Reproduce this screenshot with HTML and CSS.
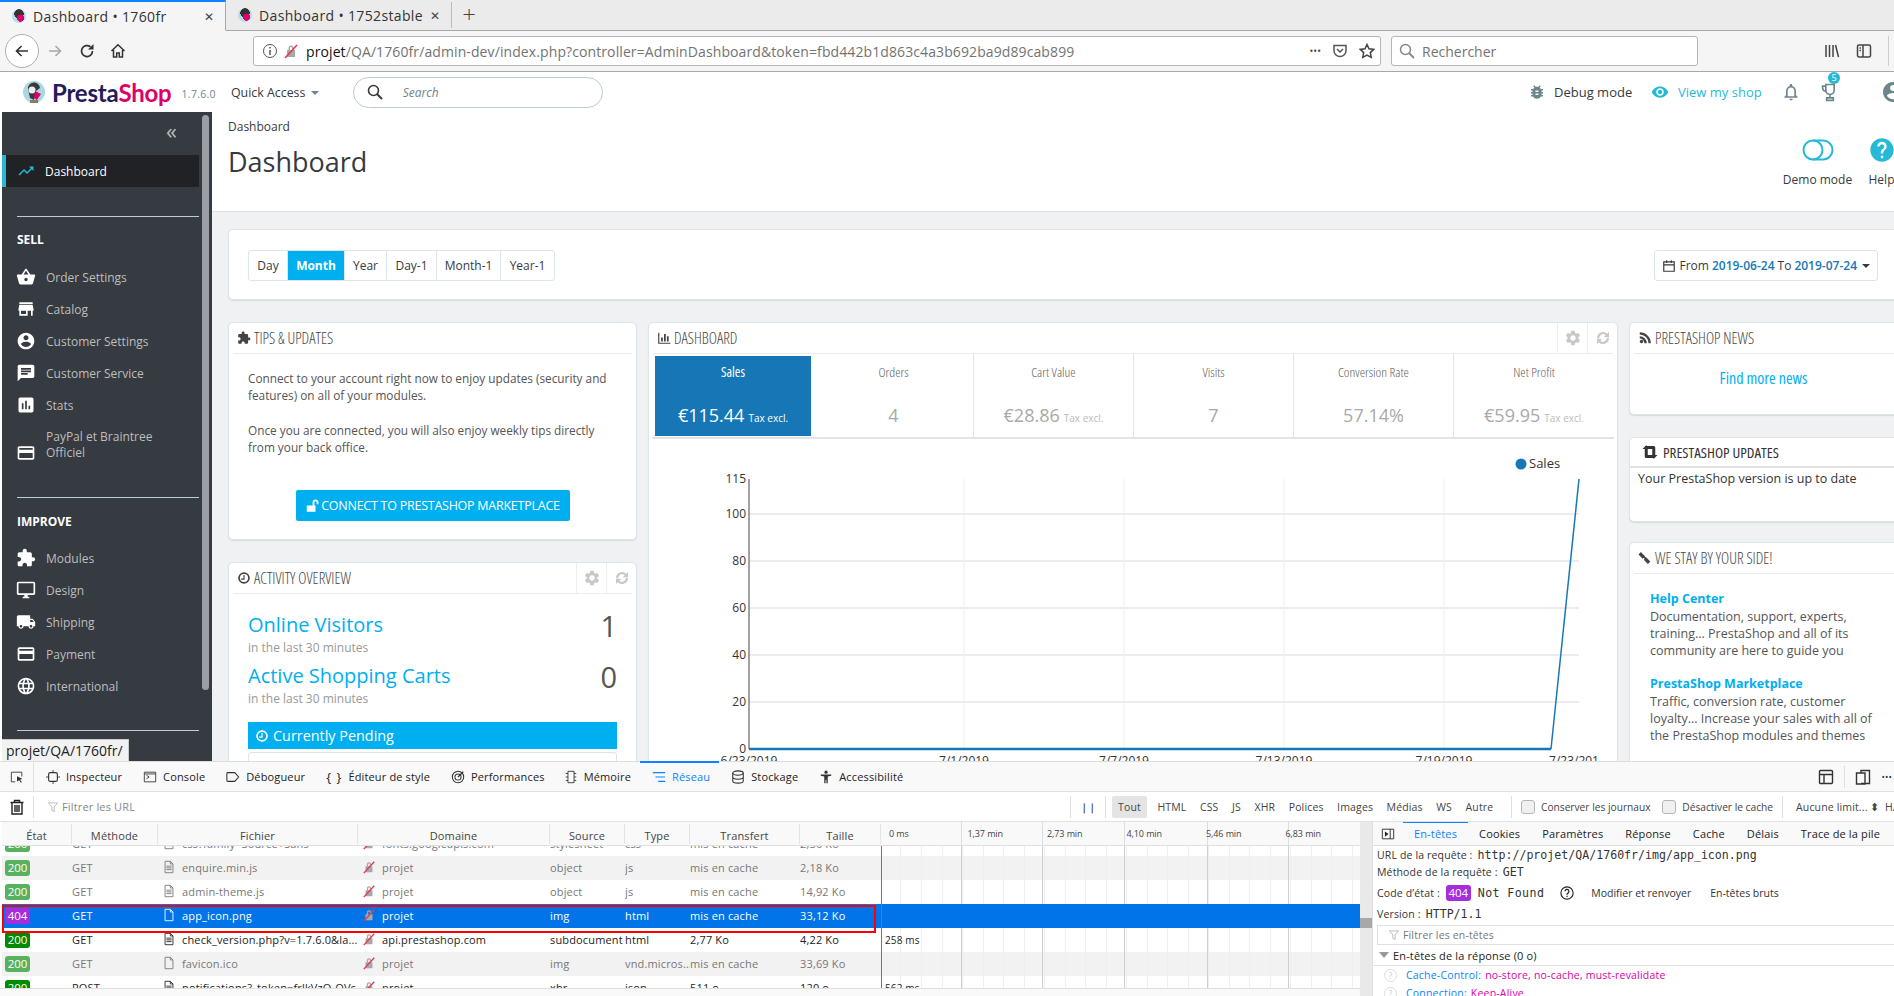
FILE: index.html
```html
<!DOCTYPE html>
<html lang="en">
<head>
<meta charset="utf-8">
<title>Dashboard • 1760fr</title>
<link rel="stylesheet" href="styles.css">
</head>
<body>
<svg class="defs" width="0" height="0" aria-hidden="true">
  <symbol id="i-basket" viewBox="0 0 24 24"><path d="M17.21 9l-4.38-6.56c-.19-.28-.51-.42-.83-.42-.32 0-.64.14-.83.43L6.79 9H2c-.55 0-1 .45-1 1 0 .09.01.18.04.27l2.54 9.27c.23.84 1 1.46 1.92 1.46h13c.92 0 1.69-.62 1.93-1.46l2.54-9.27L23 10c0-.55-.45-1-1-1h-4.79zM9 9l3-4.4L15 9H9zm3 8c-1.1 0-2-.9-2-2s.9-2 2-2 2 .9 2 2-.9 2-2 2z"/></symbol>
  <symbol id="i-store" viewBox="0 0 24 24"><path d="M20 4H4v2h16V4zm1 10v-2l-1-5H4l-1 5v2h1v6h10v-6h4v6h2v-6h1zm-9 4H6v-4h6v4z"/></symbol>
  <symbol id="i-account" viewBox="0 0 24 24"><path d="M12 2C6.48 2 2 6.48 2 12s4.48 10 10 10 10-4.48 10-10S17.52 2 12 2zm0 3c1.66 0 3 1.34 3 3s-1.34 3-3 3-3-1.34-3-3 1.34-3 3-3zm0 14.2c-2.5 0-4.71-1.28-6-3.22.03-1.99 4-3.08 6-3.08 1.99 0 5.97 1.09 6 3.08-1.29 1.94-3.5 3.22-6 3.22z"/></symbol>
  <symbol id="i-chat" viewBox="0 0 24 24"><path d="M20 2H4c-1.1 0-1.99.9-1.99 2L2 22l4-4h14c1.1 0 2-.9 2-2V4c0-1.1-.9-2-2-2zM6 9h12v2H6V9zm8 5H6v-2h8v2zm4-6H6V6h12v2z"/></symbol>
  <symbol id="i-stats" viewBox="0 0 24 24"><path d="M19 3H5c-1.1 0-2 .9-2 2v14c0 1.1.9 2 2 2h14c1.1 0 2-.9 2-2V5c0-1.1-.9-2-2-2zM9 17H7v-7h2v7zm4 0h-2V7h2v10zm4 0h-2v-4h2v4z"/></symbol>
  <symbol id="i-card" viewBox="0 0 24 24"><path d="M20 4H4c-1.11 0-1.99.89-1.99 2L2 18c0 1.11.89 2 2 2h16c1.11 0 2-.89 2-2V6c0-1.11-.89-2-2-2zm0 14H4v-6h16v6zm0-10H4V6h16v2z"/></symbol>
  <symbol id="i-ext" viewBox="0 0 24 24"><path d="M20.5 11H19V7c0-1.1-.9-2-2-2h-4V3.5C13 2.12 11.88 1 10.5 1S8 2.12 8 3.5V5H4c-1.1 0-1.99.9-1.99 2v3.8H3.5c1.49 0 2.7 1.21 2.7 2.7s-1.21 2.7-2.7 2.7H2V20c0 1.1.9 2 2 2h3.8v-1.5c0-1.49 1.21-2.7 2.7-2.7 1.49 0 2.7 1.21 2.7 2.7V22H17c1.1 0 2-.9 2-2v-4h1.5c1.38 0 2.5-1.12 2.5-2.5S21.88 11 20.5 11z"/></symbol>
  <symbol id="i-desktop" viewBox="0 0 24 24"><path d="M21 2H3c-1.1 0-2 .9-2 2v12c0 1.1.9 2 2 2h7v2H8v2h8v-2h-2v-2h7c1.1 0 2-.9 2-2V4c0-1.1-.9-2-2-2zm0 14H3V4h18v12z"/></symbol>
  <symbol id="i-truck" viewBox="0 0 24 24"><path d="M20 8h-3V4H3c-1.1 0-2 .9-2 2v11h2c0 1.66 1.34 3 3 3s3-1.34 3-3h6c0 1.66 1.34 3 3 3s3-1.34 3-3h2v-5l-3-4zM6 18.5c-.83 0-1.5-.67-1.5-1.5s.67-1.5 1.5-1.5 1.5.67 1.5 1.5-.67 1.5-1.5 1.5zm13.5-9l1.96 2.5H17V9.5h2.5zm-1.5 9c-.83 0-1.5-.67-1.5-1.5s.67-1.5 1.5-1.5 1.5.67 1.5 1.5-.67 1.5-1.5 1.5z"/></symbol>
  <symbol id="i-globe" viewBox="0 0 24 24"><path d="M11.99 2C6.47 2 2 6.48 2 12s4.47 10 9.99 10C17.52 22 22 17.52 22 12S17.52 2 11.99 2zm6.93 6h-2.95c-.32-1.25-.78-2.45-1.38-3.56 1.84.63 3.37 1.91 4.33 3.56zM12 4.04c.83 1.2 1.48 2.53 1.91 3.96h-3.82c.43-1.43 1.08-2.76 1.91-3.96zM4.26 14C4.1 13.36 4 12.69 4 12s.1-1.36.26-2h3.38c-.08.66-.14 1.32-.14 2 0 .68.06 1.34.14 2H4.26zm.82 2h2.95c.32 1.25.78 2.45 1.38 3.56-1.84-.63-3.37-1.9-4.33-3.56zm2.95-8H5.08c.96-1.66 2.49-2.93 4.33-3.56C8.81 5.55 8.35 6.75 8.03 8zM12 19.96c-.83-1.2-1.48-2.53-1.91-3.96h3.82c-.43 1.43-1.08 2.76-1.91 3.96zM14.34 14H9.66c-.09-.66-.16-1.32-.16-2 0-.68.07-1.35.16-2h4.68c.09.65.16 1.32.16 2 0 .68-.07 1.34-.16 2zm.25 5.56c.6-1.11 1.06-2.31 1.38-3.56h2.95c-.96 1.65-2.49 2.93-4.33 3.56zM16.36 14c.08-.66.14-1.32.14-2 0-.68-.06-1.34-.14-2h3.38c.16.64.26 1.31.26 2s-.1 1.36-.26 2h-3.38z"/></symbol>
  <symbol id="i-trend" viewBox="0 0 24 24"><path d="M16 6l2.29 2.29-4.88 4.88-4-4L2 16.59 3.41 18l6-6 4 4 6.3-6.29L22 12V6z"/></symbol>
  <symbol id="i-bug" viewBox="0 0 24 24"><path d="M20 8h-2.81c-.45-.78-1.07-1.45-1.82-1.96L17 4.41 15.59 3l-2.17 2.17C12.96 5.06 12.49 5 12 5c-.49 0-.96.06-1.41.17L8.41 3 7 4.41l1.62 1.63C7.88 6.55 7.26 7.22 6.81 8H4v2h2.09c-.05.33-.09.66-.09 1v1H4v2h2v1c0 .34.04.67.09 1H4v2h2.81c1.04 1.79 2.97 3 5.19 3s4.15-1.21 5.19-3H20v-2h-2.09c.05-.33.09-.66.09-1v-1h2v-2h-2v-1c0-.34-.04-.67-.09-1H20V8zm-6 8h-4v-2h4v2zm0-4h-4v-2h4v2z"/></symbol>
  <symbol id="i-eye" viewBox="0 0 24 24"><path d="M12 4.5C7 4.5 2.73 7.61 1 12c1.73 4.39 6 7.5 11 7.5s9.27-3.11 11-7.5c-1.73-4.39-6-7.5-11-7.5zM12 17c-2.76 0-5-2.24-5-5s2.24-5 5-5 5 2.24 5 5-2.24 5-5 5zm0-8c-1.66 0-3 1.34-3 3s1.34 3 3 3 3-1.34 3-3-1.34-3-3-3z"/></symbol>
  <symbol id="i-bell" viewBox="0 0 24 24"><path d="M12 22c1.1 0 2-.9 2-2h-4c0 1.1.9 2 2 2zm6-6v-5c0-3.07-1.63-5.64-4.5-6.32V4c0-.83-.67-1.5-1.5-1.5s-1.5.67-1.5 1.5v.68C7.64 5.36 6 7.92 6 11v5l-2 2v1h16v-1l-2-2zm-2 1H8v-6c0-2.48 1.51-4.5 4-4.5s4 2.02 4 4.5v6z"/></symbol>
  <symbol id="i-gear" viewBox="0 0 24 24"><path d="M19.14 12.94c.04-.3.06-.61.06-.94 0-.32-.02-.64-.07-.94l2.03-1.58a.49.49 0 0 0 .12-.61l-1.92-3.32a.488.488 0 0 0-.59-.22l-2.39.96c-.5-.38-1.03-.7-1.62-.94l-.36-2.54a.484.484 0 0 0-.48-.41h-3.84c-.24 0-.43.17-.47.41l-.36 2.54c-.59.24-1.13.57-1.62.94l-2.39-.96c-.22-.08-.47 0-.59.22L2.74 8.87c-.12.21-.08.47.12.61l2.03 1.58c-.05.3-.09.63-.09.94s.02.64.07.94l-2.03 1.58a.49.49 0 0 0-.12.61l1.92 3.32c.12.22.37.29.59.22l2.39-.96c.5.38 1.03.7 1.62.94l.36 2.54c.05.24.24.41.48.41h3.84c.24 0 .44-.17.47-.41l.36-2.54c.59-.24 1.13-.56 1.62-.94l2.39.96c.22.08.47 0 .59-.22l1.92-3.32c.12-.22.07-.47-.12-.61l-2.01-1.58zM12 15.6c-1.98 0-3.6-1.62-3.6-3.6s1.62-3.6 3.6-3.6 3.6 1.62 3.6 3.6-1.62 3.6-3.6 3.6z"/></symbol>
  <symbol id="i-refresh" viewBox="0 0 24 24"><path d="M4 12a8 8 0 0 1 13.7-5.6L20 4v7h-7l2.6-2.6A5 5 0 0 0 7 12zM20 12a8 8 0 0 1-13.7 5.6L4 20v-7h7l-2.6 2.6A5 5 0 0 0 17 12z"/></symbol>
  <symbol id="i-help" viewBox="0 0 24 24"><path d="M12 2C6.48 2 2 6.48 2 12s4.48 10 10 10 10-4.48 10-10S17.52 2 12 2zm1 17h-2v-2h2v2zm2.07-7.75l-.9.92C13.45 12.9 13 13.5 13 15h-2v-.5c0-1.1.45-2.1 1.17-2.83l1.24-1.26c.37-.36.59-.86.59-1.41 0-1.1-.9-2-2-2s-2 .9-2 2H8c0-2.21 1.79-4 4-4s4 1.79 4 4c0 .88-.36 1.68-.93 2.25z"/></symbol>
  <symbol id="i-clock" viewBox="0 0 24 24"><path d="M12 2a10 10 0 1 0 0 20 10 10 0 0 0 0-20zm0 17a7 7 0 1 1 0-14 7 7 0 0 1 0 14zm1-12h-2v6H7v2h6z"/></symbol>
  <symbol id="i-rss" viewBox="0 0 24 24"><circle cx="6" cy="18" r="3"/><path d="M3 9v4a8 8 0 0 1 8 8h4A12 12 0 0 0 3 9zM3 2v4a15 15 0 0 1 15 15h4A19 19 0 0 0 3 2z"/></symbol>
  <symbol id="i-bars" viewBox="0 0 24 24"><path d="M2 3h2v17h19v2H2zM7 11h3v7H7zM12 5h3v13h-3zM17 9h3v9h-3z"/></symbol>
  <symbol id="i-retweet" viewBox="0 0 24 24"><path d="M7 3l5 5H9v8h7l3 4H7a2 2 0 0 1-2-2V8H2zM5 4h12a2 2 0 0 1 2 2v10h3l-5 5-5-5h3V8H8z"/></symbol>
  <symbol id="i-link" viewBox="0 0 24 24"><path fill="none" stroke="currentColor" stroke-width="3" d="M5 4l5 5-2 2-5-5zM14 13l5 5-2 2-5-5zM8 8l8 8"/></symbol>
  <symbol id="i-unlock" viewBox="0 0 24 24"><path d="M3 11h15v11H3zM13 11V6a5 5 0 0 1 10 0v3h-3V6a2 2 0 0 0-4 0v5z"/></symbol>
  <symbol id="i-cal" viewBox="0 0 24 24"><path fill="none" stroke="currentColor" stroke-width="2" d="M3 5h18v16H3zM3 10h18M8 2v5M16 2v5"/></symbol>
  <symbol id="i-file" viewBox="0 0 16 16"><path fill="none" stroke="currentColor" d="M3.500 1.500h6l3 3v10h-9zM9.500 1.500v3h3"/></symbol>
  <symbol id="i-doc" viewBox="0 0 16 16"><path fill="none" stroke="currentColor" d="M3.500 1.500h6l3 3v10h-9zM9.500 1.500v3h3M5 7h6M5 9h6M5 11h6"/></symbol>
  <symbol id="i-lock" viewBox="0 0 16 16"><path fill="#a8a8a8" d="M4 7h8v7H4zM5.500 7V5a2.500 2.500 0 0 1 5 0v2H9V5a1 1 0 0 0-2 0v2z"/><path stroke="#e8384c" stroke-width="1.600" d="M2 15L14 2"/></symbol>
  <symbol id="i-funnel" viewBox="0 0 16 16"><path fill="none" stroke="#aaa" d="M2 2.500h12l-4.500 5.500v6l-3-1.500V8z"/></symbol>
</svg>

<div class="app">
  <div class="tabbar">
    <div class="tab tab-on"><span class="favicon"></span><span class="tab-t">Dashboard • 1760fr</span><span class="tab-x">✕</span></div>
    <div class="tab"><span class="favicon"></span><span class="tab-t">Dashboard • 1752stable</span><span class="tab-x">✕</span></div>
    <div class="tab-new">+</div>
  </div>

  <div class="navbar">
    <div class="nav-back"><svg viewBox="0 0 16 16" class="i16"><path fill="none" stroke="#333" stroke-width="1.600" d="M14 8H2.500M7.500 3l-5 5 5 5"/></svg></div>
    <svg viewBox="0 0 16 16" class="i16 nav-fwd"><path fill="none" stroke="#a8a8a8" stroke-width="1.600" d="M2 8h11.500M8.500 3l5 5-5 5"/></svg>
    <svg viewBox="0 0 16 16" class="i16 nav-ic"><path fill="none" stroke="#333" stroke-width="1.700" d="M13.500 8A5.500 5.500 0 1 1 11.500 3.800"/><path fill="#333" d="M14.500 1v5.500H9z"/></svg>
    <svg viewBox="0 0 16 16" class="i16 nav-ic"><path fill="none" stroke="#333" stroke-width="1.500" d="M1.500 8L8 1.800 14.500 8M3.500 7v7h3.200v-4h2.600v4h3.200V7"/></svg>
    <div class="urlbar">
      <svg viewBox="0 0 16 16" class="i16"><circle cx="8" cy="8" r="6.500" fill="none" stroke="#555"/><path stroke="#555" stroke-width="1.500" d="M8 7v5M8 4v1.500"/></svg>
      <svg viewBox="0 0 16 16" class="i16"><use href="#i-lock"/></svg>
      <span class="url"><b>projet</b>/QA/1760fr/admin-dev/index.php?controller=AdminDashboard&amp;token=fbd442b1d863c4a3b692ba9d89cab899</span>
      <span class="url-dots">•••</span>
      <svg viewBox="0 0 16 16" class="i16"><path fill="none" stroke="#555" stroke-width="1.500" d="M2 2.500h12v5a6 6 0 0 1-12 0zM5 6l3 3 3-3"/></svg>
      <svg viewBox="0 0 16 16" class="i16"><path fill="none" stroke="#444" stroke-width="1.500" d="M8 1.500l2 4.300 4.700.6-3.400 3.200.9 4.700L8 12l-4.200 2.300.9-4.700L1.300 6.400 6 5.800z"/></svg>
    </div>
    <div class="searchbar">
      <svg viewBox="0 0 16 16" class="i16"><circle cx="6.500" cy="6.500" r="5" fill="none" stroke="#888" stroke-width="1.500"/><path stroke="#888" stroke-width="1.800" d="M10 10l5 5"/></svg>
      <span>Rechercher</span>
    </div>
    <div class="nav-right">
      <svg viewBox="0 0 16 16" class="i16"><path fill="none" stroke="#444" stroke-width="1.500" d="M2 2v12M5.500 2v12M9 2v12M11.500 2l3 12"/></svg>
      <svg viewBox="0 0 16 16" class="i16"><path fill="none" stroke="#444" stroke-width="1.500" d="M3 2h10a1.500 1.500 0 0 1 1.500 1.500v9A1.500 1.500 0 0 1 13 14H3a1.500 1.500 0 0 1-1.500-1.500v-9A1.500 1.500 0 0 1 3 2zM7 2v12M3.500 5H5M3.500 7.500H5"/></svg>
      <span class="nav-sep"></span>
    </div>
  </div>

  <div class="page">
    <header class="ps-head">
      <svg class="logo" viewBox="0 0 24 24"><circle cx="12" cy="12" r="11" fill="#a9d7e4"/><path fill="#3a3a3a" d="M6 9a6 6 0 0 1 12-1l-4 3-2 9-4-2z"/><circle cx="10" cy="10" r="3.500" fill="#eee"/><path fill="#df0067" d="M13 11l6 3-4 6-3-2z"/><path fill="#8c7a64" d="M8 20h8v3H8z"/></svg>
      <span class="brand"><span class="b1">Presta</span><span class="b2">Shop</span></span>
      <span class="ver">1.7.6.0</span>
      <span class="quick">Quick Access <i class="caret"></i></span>
      <div class="ps-search">
        <svg class="ic16" viewBox="0 0 16 16"><circle cx="6.500" cy="6.500" r="5" fill="none" stroke="#363a41" stroke-width="1.600"/><path stroke="#363a41" stroke-width="2" d="M10 10l5 5"/></svg>
        <em>Search</em>
      </div>
      <div class="head-right">
        <svg class="ic18 c-grey"><use href="#i-bug"/></svg><span class="debug">Debug mode</span>
        <svg class="ic18 c-blue eye"><use href="#i-eye"/></svg><span class="view">View my shop</span>
        <svg class="ic20 c-grey bell"><use href="#i-bell"/></svg>
        <span class="trophy"><svg viewBox="0 0 24 24" class="ic20"><path fill="none" stroke="#6c868e" stroke-width="2" d="M7 3h10v7a5 5 0 0 1-10 0zM7 5H3c0 4 2 6 4 6M12 15v4M8 19h8v3H8z"/></svg><span class="badge">5</span></span>
        <svg class="ic24 c-grey user"><use href="#i-account"/></svg>
      </div>
    </header>

    <div class="ps-body">
      <nav class="side">
        <div class="side-collapse">«</div>
        <div class="side-item side-on"><svg class="ic18 c-blue"><use href="#i-trend"/></svg><span>Dashboard</span></div>
        <div class="side-sep"></div>
        <div class="side-title">SELL</div>
        <div class="side-item"><svg class="ic20"><use href="#i-basket"/></svg><span>Order Settings</span></div>
        <div class="side-item"><svg class="ic20"><use href="#i-store"/></svg><span>Catalog</span></div>
        <div class="side-item"><svg class="ic20"><use href="#i-account"/></svg><span>Customer Settings</span></div>
        <div class="side-item"><svg class="ic20"><use href="#i-chat"/></svg><span>Customer Service</span></div>
        <div class="side-item"><svg class="ic20"><use href="#i-stats"/></svg><span>Stats</span></div>
        <div class="side-item side-two"><svg class="ic20"><use href="#i-card"/></svg><span>PayPal et Braintree Officiel</span></div>
        <div class="side-sep sep-gap"></div>
        <div class="side-title">IMPROVE</div>
        <div class="side-item"><svg class="ic20"><use href="#i-ext"/></svg><span>Modules</span></div>
        <div class="side-item"><svg class="ic20"><use href="#i-desktop"/></svg><span>Design</span></div>
        <div class="side-item"><svg class="ic20"><use href="#i-truck"/></svg><span>Shipping</span></div>
        <div class="side-item"><svg class="ic20"><use href="#i-card"/></svg><span>Payment</span></div>
        <div class="side-item"><svg class="ic20"><use href="#i-globe"/></svg><span>International</span></div>
        <div class="side-sep sep-gap"></div>
        <div class="side-thumb"></div>
      </nav>

      <main class="main">
        <div class="head2">
          <div class="head2-l">
            <div class="crumb">Dashboard</div>
            <h1>Dashboard</h1>
          </div>
          <div class="head2-r">
            <div class="h-act act-demo">
              <svg viewBox="0 0 32 22" class="toggle"><circle cx="11" cy="11" r="9.500" fill="none" stroke="#25b9d7" stroke-width="2"/><path fill="none" stroke="#25b9d7" stroke-width="2" d="M11 1.500h10a9.500 9.500 0 0 1 0 19H11"/></svg>
              <span>Demo mode</span>
            </div>
            <div class="h-act act-help">
              <svg class="ic28 c-blue"><use href="#i-help"/></svg>
              <span>Help</span>
            </div>
          </div>
        </div>

        <div class="content">
          <section class="card datecard">
            <div class="btn-group">
              <span>Day</span><span class="on">Month</span><span>Year</span><span>Day-1</span><span>Month-1</span><span>Year-1</span>
            </div>
            <div class="datepick"><svg class="ic14"><use href="#i-cal"/></svg> From <b>2019-06-24</b> To <b>2019-07-24</b> <i class="caret dark"></i></div>
          </section>

          <div class="cols">
            <div class="col">
              <section class="card tips">
                <div class="card-h"><svg class="ic14"><use href="#i-ext"/></svg><span>TIPS &amp; UPDATES</span></div>
                <div class="tips-b">
                  <p>Connect to your account right now to enjoy updates (security and features) on all of your modules.</p>
                  <p>Once you are connected, you will also enjoy weekly tips directly from your back office.</p>
                  <div class="connect"><svg class="ic14"><use href="#i-unlock"/></svg>CONNECT TO PRESTASHOP MARKETPLACE</div>
                </div>
              </section>
              <section class="card activity">
                <div class="card-h"><svg class="ic14"><use href="#i-clock"/></svg><span>ACTIVITY OVERVIEW</span>
                  <div class="h-tools"><span><svg class="ic18 c-lgrey"><use href="#i-gear"/></svg></span><span><svg class="ic18 c-lgrey"><use href="#i-refresh"/></svg></span></div>
                </div>
                <div class="act-b">
                  <div class="stat"><div><a>Online Visitors</a><small>in the last 30 minutes</small></div><strong>1</strong></div>
                  <div class="stat"><div><a>Active Shopping Carts</a><small>in the last 30 minutes</small></div><strong>0</strong></div>
                  <div class="pending"><svg class="ic14"><use href="#i-clock"/></svg>Currently Pending</div>
                  <div class="pending-box"></div>
                </div>
              </section>
            </div>

            <section class="card dash">
              <div class="card-h"><svg class="ic14"><use href="#i-bars"/></svg><span>DASHBOARD</span>
                <div class="h-tools"><span><svg class="ic18 c-lgrey"><use href="#i-gear"/></svg></span><span><svg class="ic18 c-lgrey"><use href="#i-refresh"/></svg></span></div>
              </div>
              <div class="kpis">
                <div class="kpi kpi-on"><label>Sales</label><div><b>€115.44</b> <small>Tax excl.</small></div></div>
                <div class="kpi"><label>Orders</label><div><b>4</b></div></div>
                <div class="kpi"><label>Cart Value</label><div><b>€28.86</b> <small>Tax excl.</small></div></div>
                <div class="kpi"><label>Visits</label><div><b>7</b></div></div>
                <div class="kpi"><label>Conversion Rate</label><div><b>57.14%</b></div></div>
                <div class="kpi"><label>Net Profit</label><div><b>€59.95</b> <small>Tax excl.</small></div></div>
              </div>
              <svg class="chart" viewBox="0 0 970 330" width="970" height="330">
                <g class="grid">
                  <path d="M100 74H930M100 121H930M100 168H930M100 215H930M100 262H930"/>
                  <path class="gv" d="M315 39V309M475 39V309M635 39V309M795 39V309"/>
                </g>
                <path class="axis" d="M100 39V309"/>
                <g class="ylab">
                  <text x="97" y="43">115</text><text x="97" y="78">100</text><text x="97" y="125">80</text><text x="97" y="172">60</text><text x="97" y="219">40</text><text x="97" y="266">20</text><text x="97" y="313">0</text>
                </g>
                <g class="xlab">
                  <text x="100" y="325">6/23/2019</text><text x="315" y="325">7/1/2019</text><text x="475" y="325">7/7/2019</text><text x="635" y="325">7/13/2019</text><text x="795" y="325">7/19/2019</text><text x="925" y="325">7/23/201</text>
                </g>
                <path class="zero" d="M100 309H902"/>
                <path class="line" d="M902 309L930 39"/>
                <circle cx="872" cy="24" r="5.500" fill="#1777b6"/>
                <text class="leg" x="880" y="28">Sales</text>
              </svg>
            </section>

            <div class="col">
              <section class="card news">
                <div class="card-h"><svg class="ic14"><use href="#i-rss"/></svg><span>PRESTASHOP NEWS</span></div>
                <div class="news-b"><a>Find more news</a></div>
              </section>
              <section class="card upd">
                <div class="upd-h"><svg class="ic18"><use href="#i-retweet"/></svg><span>PRESTASHOP UPDATES</span></div>
                <div class="upd-b">Your PrestaShop version is up to date</div>
              </section>
              <section class="card stay">
                <div class="card-h"><svg class="ic14"><use href="#i-link"/></svg><span>WE STAY BY YOUR SIDE!</span></div>
                <div class="stay-b">
                  <h4>Help Center</h4>
                  <p>Documentation, support, experts,<br>training... PrestaShop and all of its<br>community are here to guide you</p>
                  <h4>PrestaShop Marketplace</h4>
                  <p>Traffic, conversion rate, customer<br>loyalty... Increase your sales with all of<br>the PrestaShop modules and themes</p>
                </div>
              </section>
            </div>
          </div>
        </div>
      </main>
    </div>
    <div class="status-tip">projet/QA/1760fr/</div>
  </div>

  <div class="devtools">
    <div class="dt-tabs">
      <span class="dt-pick"><svg viewBox="0 0 16 16" class="i14"><path fill="none" stroke="#333" d="M1.500 2.500h12v5M6 13.500H1.500v-11"/><path fill="#333" d="M8 7l6 3-2.500 1 2 3-1 .6-2-3L8 13z"/></svg></span>
      <span class="dt-t"><svg viewBox="0 0 16 16" class="i14"><rect x="3" y="3" width="10" height="10" rx="2" fill="none" stroke="#333" stroke-width="1.300"/><path stroke="#333" d="M8 0v3M8 13v3M0 8h3M13 8h3"/></svg>Inspecteur</span>
      <span class="dt-t"><svg viewBox="0 0 16 16" class="i14"><path fill="none" stroke="#333" d="M1.500 2.500h13v11h-13zM4 6l3 2-3 2M2 4.500h12"/></svg>Console</span>
      <span class="dt-t"><svg viewBox="0 0 16 16" class="i14"><path fill="none" stroke="#333" stroke-width="1.200" d="M2 3h8l4.500 5L10 13H2a1 1 0 0 1-1-1V4a1 1 0 0 1 1-1z"/></svg>Débogueur</span>
      <span class="dt-t"><span class="brace">{ }</span>Éditeur de style</span>
      <span class="dt-t dt-perf"><svg viewBox="0 0 16 16" class="i14"><circle cx="8" cy="8" r="6.500" fill="none" stroke="#333" stroke-width="1.200"/><circle cx="8" cy="8" r="3.500" fill="none" stroke="#333" stroke-width="1.200"/><path stroke="#333" stroke-width="1.400" d="M8 8l6-6"/></svg>Performances</span>
      <span class="dt-t"><svg viewBox="0 0 16 16" class="i14"><path fill="none" stroke="#333" d="M4.500 1.500h7v13h-7zM4.500 4H2M4.500 8H2M4.500 12H2M11.500 4H14M11.500 8H14M11.500 12H14"/></svg>Mémoire</span>
      <span class="dt-t dt-on"><svg viewBox="0 0 16 16" class="i14"><path stroke="#0a84ff" stroke-width="1.300" d="M1 3h14M4 8h11M7 13h8"/></svg>Réseau</span>
      <span class="dt-t"><svg viewBox="0 0 16 16" class="i14"><ellipse cx="8" cy="3.500" rx="6" ry="2.500" fill="none" stroke="#333" stroke-width="1.200"/><path fill="none" stroke="#333" stroke-width="1.200" d="M2 3.500v9c0 1.400 2.700 2.500 6 2.500s6-1.100 6-2.500v-9M2 8c0 1.400 2.700 2.500 6 2.500S14 9.400 14 8"/></svg>Stockage</span>
      <span class="dt-t"><svg viewBox="0 0 16 16" class="i14"><circle cx="8" cy="2.500" r="1.800" fill="#333"/><path fill="#333" d="M2 5h12v1.500l-4 1V15H8.500v-4h-1v4H6V7.500l-4-1z"/></svg>Accessibilité</span>
      <span class="dt-right">
        <svg viewBox="0 0 16 16" class="i16"><path fill="none" stroke="#333" stroke-width="1.400" d="M2.500 1.500h11a1 1 0 0 1 1 1v11a1 1 0 0 1-1 1h-11a1 1 0 0 1-1-1v-11a1 1 0 0 1 1-1zM1.500 5.500h13M6 5.500v9"/></svg>
        <i class="vsep"></i>
        <svg viewBox="0 0 16 16" class="i16"><path fill="none" stroke="#333" stroke-width="1.400" d="M6 4V1.500h8.500v13H6M1.500 4H10v11H1.500z"/></svg>
        <span class="dots">•••</span>
      </span>
    </div>

    <div class="dt-filter">
      <span class="dt-trash"><svg viewBox="0 0 16 16" class="i16"><path fill="none" stroke="#222" stroke-width="1.400" d="M1.500 3.500h13M5.500 3.500V1.500h5v2M3 3.500V15h10V3.500M6 6v7M8 6v7M10 6v7"/></svg></span>
      <span class="dt-url"><svg viewBox="0 0 16 16" class="i12"><use href="#i-funnel"/></svg>Filtrer les URL</span>
      <span class="dt-pause">❘❘</span>
      <span class="chips"><span class="chip-on">Tout</span><span>HTML</span><span>CSS</span><span>JS</span><span>XHR</span><span>Polices</span><span>Images</span><span>Médias</span><span>WS</span><span>Autre</span></span>
      <span class="checks">
        <label><i class="cb"></i>Conserver les journaux</label>
        <label><i class="cb"></i>Désactiver le cache</label>
      </span>
      <span class="throttle">Aucune limit... ⬍</span>
      <span class="har">HAR</span>
    </div>

    <div class="dt-main">
      <div class="net">
        <div class="row-h">
          <span>État</span><span>Méthode</span><span>Fichier</span><span>Domaine</span><span>Source</span><span>Type</span><span>Transfert</span><span>Taille</span>
          <span class="ticks"><i>0 ms</i><i>1,37 min</i><i>2,73 min</i><i>4,10 min</i><i>5,46 min</i><i>6,83 min</i></span>
        </div>
        <div class="rows">
          <div class="row dim clip"><span><b class="st ok">200</b></span><span>GET</span><span class="f"><svg class="i14"><use href="#i-doc"/></svg>css?family=Source+Sans</span><span class="d"><svg class="i14"><use href="#i-lock"/></svg>fonts.googleapis.com</span><span>stylesheet</span><span>css</span><span>mis en cache</span><span>2,50 Ko</span><span class="tl"></span></div>
          <div class="row alt dim"><span><b class="st ok">200</b></span><span>GET</span><span class="f"><svg class="i14"><use href="#i-doc"/></svg>enquire.min.js</span><span class="d"><svg class="i14"><use href="#i-lock"/></svg>projet</span><span>object</span><span>js</span><span>mis en cache</span><span>2,18 Ko</span><span class="tl"></span></div>
          <div class="row dim"><span><b class="st ok">200</b></span><span>GET</span><span class="f"><svg class="i14"><use href="#i-doc"/></svg>admin-theme.js</span><span class="d"><svg class="i14"><use href="#i-lock"/></svg>projet</span><span>object</span><span>js</span><span>mis en cache</span><span>14,92 Ko</span><span class="tl"></span></div>
          <div class="row sel"><span><b class="st err">404</b></span><span>GET</span><span class="f"><svg class="i14"><use href="#i-file"/></svg>app_icon.png</span><span class="d"><svg class="i14"><use href="#i-lock"/></svg>projet</span><span>img</span><span>html</span><span>mis en cache</span><span>33,12 Ko</span><span class="tl"></span></div>
          <div class="row"><span><b class="st ok2">200</b></span><span>GET</span><span class="f"><svg class="i14"><use href="#i-doc"/></svg>check_version.php?v=1.7.6.0&amp;la...</span><span class="d"><svg class="i14"><use href="#i-lock"/></svg>api.prestashop.com</span><span>subdocument</span><span>html</span><span>2,77 Ko</span><span>4,22 Ko</span><span class="tl"><em>258 ms</em></span></div>
          <div class="row alt dim"><span><b class="st ok">200</b></span><span>GET</span><span class="f"><svg class="i14"><use href="#i-file"/></svg>favicon.ico</span><span class="d"><svg class="i14"><use href="#i-lock"/></svg>projet</span><span>img</span><span>vnd.micros...</span><span>mis en cache</span><span>33,69 Ko</span><span class="tl"></span></div>
          <div class="row"><span><b class="st ok2">200</b></span><span>POST</span><span class="f"><svg class="i14"><use href="#i-doc"/></svg>notifications?_token=frlkVzO-OVs</span><span class="d"><svg class="i14"><use href="#i-lock"/></svg>projet</span><span>xhr</span><span>json</span><span>511 o</span><span>120 o</span><span class="tl"><em>562 ms</em></span></div>
          <div class="redbox"></div>
        </div>
        <div class="dt-status"></div>
      </div>
      <div class="vscroll"><i></i></div>
      <div class="panel">
        <div class="p-tabs">
          <span class="p-side"><svg viewBox="0 0 16 16" class="i14"><path fill="none" stroke="#222" d="M1.500 2.500h13v11h-13zM10.500 2.500v11"/><path fill="#222" d="M4.500 5l4 3-4 3z"/></svg></span>
          <span class="p-on">En-têtes</span><span>Cookies</span><span>Paramètres</span><span>Réponse</span><span>Cache</span><span>Délais</span><span>Trace de la pile</span>
        </div>
        <div class="p-line l1"><span class="k">URL de la requête :</span><span class="m">http://projet/QA/1760fr/img/app_icon.png</span></div>
        <div class="p-line l2"><span class="k">Méthode de la requête :</span><span class="m">GET</span></div>
        <div class="p-line l3"><span class="k">Code d’état :</span><b class="st err">404</b><span class="m nf">Not Found</span><svg viewBox="0 0 16 16" class="i14 qm"><circle cx="8" cy="8" r="7" fill="none" stroke="#222" stroke-width="1.300"/><path fill="none" stroke="#222" stroke-width="1.400" d="M5.800 6a2.200 2.200 0 1 1 3.400 1.900C8.400 8.500 8 8.900 8 10M8 11.200v1.500"/></svg><span class="lnk">Modifier et renvoyer</span><span class="lnk">En-têtes bruts</span></div>
        <div class="p-line l4"><span class="k">Version :</span><span class="m">HTTP/1.1</span></div>
        <div class="p-filter"><svg viewBox="0 0 16 16" class="i12"><use href="#i-funnel"/></svg>Filtrer les en-têtes</div>
        <div class="p-sec"><i class="tri"></i>En-têtes de la réponse (0 o)</div>
        <div class="p-hdr"><i class="q">?</i><span class="hk">Cache-Control:</span><span class="hv">no-store, no-cache, must-revalidate</span></div>
        <div class="p-hdr"><i class="q">?</i><span class="hk">Connection:</span><span class="hv">Keep-Alive</span></div>
      </div>
    </div>
  </div>
</div>
</body>
</html>
```
FILE: styles.css
```css
*{box-sizing:border-box}
html,body{margin:0;height:100%;overflow:hidden;background:#fff}
body{font-family:"Open Sans","Noto Sans",sans-serif;font-size:13px;color:#363a41}
.defs{position:absolute}
svg{fill:currentColor;flex:none}
.i12{width:12px;height:12px}.i14{width:14px;height:14px}.i16{width:16px;height:16px}
.ic14{width:14px;height:14px}.ic16{width:16px;height:16px}.ic18{width:18px;height:18px}.ic20{width:20px;height:20px}.ic24{width:24px;height:24px}.ic28{width:28px;height:28px}
.c-grey{color:#6c868e}.c-blue{color:#25b9d7}.c-lgrey{color:#c8c8c8}
.app{display:flex;flex-direction:column;width:1894px;height:996px;overflow:hidden}

/* browser */
.tabbar{height:31px;background:#ebebeb;display:flex;border-bottom:1px solid #a8a8a8;font-size:14px;color:#333;flex:none}
.tab{width:226px;height:31px;display:flex;align-items:center;padding:0 11px 0 12px;letter-spacing:.35px;border-right:1px solid #a8a8a8}
.tab-on{background:#f5f5f5;border-top:2px solid #0a84ff;border-bottom:1px solid #f5f5f5}
.tab + .tab{padding-left:12px;border-right:1px solid #bbb;height:26px;margin-top:2px}
.favicon{width:14px;height:14px;border-radius:50%;background:radial-gradient(circle at 60% 65%,#df0067 0 28%,transparent 30%),radial-gradient(circle at 50% 35%,#333 0 40%,#b8dbe6 42%);margin-right:7px;flex:none}
.tab-t{flex:1;white-space:nowrap}
.tab-x{font-size:12px;color:#444}
.tab-new{width:34px;text-align:center;font-size:24px;line-height:27px;font-weight:300;color:#444}
.navbar{height:41px;flex:none;background:#f5f5f5;border-bottom:1px solid #a8a8a8;display:flex;align-items:center;padding-left:5px}
.nav-back{width:34px;height:34px;border:1px solid #b0b0b0;border-radius:50%;background:#fff;display:flex;align-items:center;justify-content:center}
.nav-fwd{margin-left:8px}
.nav-ic{margin-left:16px}
.nav-ic + .nav-ic{margin-left:15px}
.urlbar{margin-left:127px;width:1128px;height:30px;background:#fff;border:1px solid #b5b5b5;border-radius:3px;display:flex;align-items:center;padding:0 5px 0 8px;gap:5px;font-size:14px;color:#737373;letter-spacing:.1px}
.url{flex:1;margin-left:2px;white-space:nowrap;overflow:hidden}
.url b{font-weight:400;color:#111}
.url-dots{font-size:10px;color:#444;margin-right:6px}
.urlbar svg:last-child{margin-left:6px}
.searchbar{margin-left:10px;width:307px;height:30px;background:#fff;border:1px solid #b5b5b5;border-radius:3px;display:flex;align-items:center;padding-left:7px;gap:7px;font-size:14px;color:#737373}
.nav-right{margin-left:auto;display:flex;align-items:center;gap:16px;padding-right:5px;height:100%}
.nav-sep{width:1px;height:30px;background:#ccc}

/* prestashop */
.page{flex:1;min-height:0;position:relative;display:flex;flex-direction:column;overflow:hidden;background:#fff}
.ps-head{height:40px;flex:none;display:flex;align-items:center;padding-left:22px}
.logo{width:24px;height:24px}
.brand{margin-left:6px;font-family:Lato,"Open Sans",sans-serif;font-size:24px;font-weight:700;letter-spacing:-.2px}
.b1{color:#251b5b}.b2{color:#df0067}
.ver{margin-left:10px;font-size:10.500px;color:#6c868e;letter-spacing:.3px;padding-top:4px}
.quick{margin-left:15px;font-size:12.400px;color:#363a41}
.caret{display:inline-block;border:4px solid transparent;border-top:4px solid #6c868e;border-bottom:0;vertical-align:middle;margin-left:2px}
.caret.dark{border-top-color:#363a41}
.ps-search{margin-left:34px;width:250px;height:31px;border:1px solid #bbcdd2;border-radius:16px;display:flex;align-items:center;padding-left:13px;gap:20px}
.ps-search em{font-size:12px;color:#6c868e}
.head-right{margin-left:auto;display:flex;align-items:center;font-size:13px;height:100%;width:366px;flex:none}
.debug{margin-left:8px;color:#363a41;width:97px;flex:none;white-space:nowrap}
.eye{margin-right:9px}
.view{color:#25b9d7;width:90px;flex:none;white-space:nowrap}
.bell{margin-left:13px}
.trophy{position:relative;margin-left:19px;width:20px;height:20px;flex:none}
.badge{position:absolute;left:8px;top:-10px;width:12px;height:12px;border-radius:50%;background:#25b9d7;color:#fff;font-size:9px;line-height:12px;text-align:center}
.user{margin-left:41px}
.ps-body{flex:1;min-height:0;display:flex;padding-left:2px}
.side{width:210px;flex:none;background:#363a41;position:relative;color:#bebebe;font-size:12px;padding-top:43px;overflow:hidden}
.side-collapse{position:absolute;left:164px;top:7px;font-size:22px;line-height:22px;color:#bebebe}
.side-item{height:32px;width:197px;display:flex;align-items:center;padding-left:14px;gap:10px}
.side-item svg{color:#fff}
.side-on{background:#202226;border-left:4px solid #25b9d7;padding-left:11px;color:#fff;gap:10px}
.side-on svg{color:#25b9d7}
.side-sep{height:1px;background:#bbcdd2;margin:29px 0 0 15px;width:182px}
.sep-gap{margin-top:28px}
.side-title{height:44px;line-height:46px;padding-left:15px;font-size:12px;font-weight:700;color:#fff}
.sep-gap + .side-title{line-height:47px}
.side-two{height:48px;align-items:flex-end;padding-bottom:6px}
.side-two span{width:130px;line-height:16px;margin-bottom:2px}
.side-thumb{position:absolute;left:200px;top:3px;width:7px;height:575px;background:#9b9ea3;border-radius:4px}
.main{flex:1;min-width:0;background:#eff1f2;overflow:hidden}
.head2{height:100px;background:#fff;border-bottom:1px solid #dfdfdf;display:flex;justify-content:space-between;padding-left:16px}
.crumb{font-size:12px;margin-top:6px;line-height:18px}
h1{margin:7px 0 0;font-size:27px;font-weight:400;line-height:38px;color:#363a41}
.head2-r{display:flex;align-items:flex-start;padding-top:24px}
.h-act{display:flex;flex-direction:column;align-items:center;font-size:12px;gap:7px}
.act-demo{width:69px;margin-right:17px}
.act-help{width:25px;margin-right:0}
.toggle{width:32px;height:22px;margin-top:3px;margin-bottom:3px}
.act-demo span{white-space:nowrap}
.content{padding:17px 0 0 16px;width:1690px}
.card{background:#fff;border:1px solid #dbe6e9;border-radius:5px;box-shadow:0 1px 1px #d3dcdf}
.datecard{height:71px;width:1670px;padding:20px 19px 0;display:flex;justify-content:space-between;align-items:flex-start}
.btn-group{display:grid;grid-template-columns:38px 57px 42px 50px 64px 54px;height:31px;border:1px solid #dbe6e9;border-radius:3px;font-size:12px;text-align:center}
.btn-group span{line-height:29px;border-left:1px solid #dbe6e9}
.btn-group span:first-child{border-left:0}
.btn-group .on{background:#00aff0;color:#fff;font-weight:700}
.datepick{height:31px;border:1px solid #dbe6e9;border-radius:3px;padding:0 7px;line-height:29px;font-size:12px;white-space:nowrap;display:flex;align-items:center;gap:3px}
.datepick b{color:#1777b6;font-weight:600}
.cols{display:grid;grid-template-columns:409px 970px 420px;column-gap:11px;margin-top:22px;align-items:start}
.col{display:flex;flex-direction:column;gap:22px}
.card-h{height:31px;margin:0 4px;border-bottom:1px solid #e8eced;display:flex;align-items:center;gap:3px;padding-left:4px;font-stretch:75%;font-weight:300;font-size:15.500px;color:#444;position:relative}
.h-tools{margin-left:auto;display:flex;height:100%;margin-right:-4px}
.h-tools span{width:30px;display:flex;align-items:center;justify-content:center;border-left:1px solid #eee}
.tips{height:218px}
.tips-b{padding:0 19px;font-size:11.800px;line-height:17.300px;color:#555}
.tips-b p{margin:16px 0 0}
.tips-b p + p{margin-top:17px}
.connect{margin:34px auto 0;width:274px;height:31px;background:#00aff0;border-radius:2px;color:#fff;display:flex;align-items:center;justify-content:center;gap:2px;font-size:12.500px;white-space:nowrap;letter-spacing:-.25px}
.activity{height:400px}
.act-b{padding:16px 19px 0}
.stat{display:flex;justify-content:space-between;height:51px}
.stat a{display:block;color:#00aff0;font-size:20px;line-height:28px;padding-top:1px}
.stat small{display:block;font-size:12px;color:#999;line-height:18px}
.stat strong{font-size:29px;font-weight:400;line-height:34px;color:#555;margin-top:-1px}
.pending{margin-top:10px;height:27px;background:#00aff0;color:#fff;display:flex;align-items:center;gap:4px;padding-left:7px;font-size:14.400px}
.pending-box{margin-top:3px;height:40px;border:1px solid #dbe6e9;border-radius:3px}
.dash{height:500px}
.kpis{display:grid;grid-template-columns:162px repeat(5,160px);height:85px;margin:0 3px;border-bottom:2px solid #e4e4e4}
.kpi{display:flex;flex-direction:column;align-items:center;border-right:1px solid #e4e4e4;color:#5f5f5f;font-size:13.500px;padding-top:9px;height:83px}
.kpi:last-child{border-right:0}
.kpi label{line-height:18px;font-stretch:75%;font-weight:300}
.kpi-on label{font-weight:400}
.kpi div{margin-top:19px;display:flex;align-items:baseline;gap:4px;white-space:nowrap;line-height:30px}
.kpi b{font-weight:400;font-size:18px;color:#a9a9a9}
.kpi small{font-size:10px;color:#bbb}
.kpi-on{background:#1777b6;color:#fff;margin:2px 3px;height:80px;padding-top:7px;border:0}
.kpi-on b,.kpi-on small{color:#fff}
.chart{display:block;margin-top:1px}
.grid path{stroke:#e6e6e6;fill:none;stroke-width:1.400}
.grid .gv{stroke:#eee;stroke-width:1}
.axis{stroke:#444;fill:none}
.zero{stroke:#1777b6;stroke-width:2.500;fill:none}
.line{stroke:#1777b6;stroke-width:1.500;fill:none}
.ylab text{font-size:12px;text-anchor:end;fill:#333}
.xlab text{font-size:12px;text-anchor:middle;fill:#333}
.leg{font-size:13px;fill:#333}
.news{height:93px}
.news-b{text-align:center;padding-top:13px;width:267px;font-stretch:75%;font-size:16px;color:#00aff0}
.upd{height:85px}
.upd-h{height:30px;border-bottom:2px solid #e2e2e2;display:flex;align-items:center;gap:4px;padding-left:11px;font-stretch:85%;font-size:15px;color:#333}
.upd-b{padding:2px 8px;font-size:12.500px;color:#333;line-height:17px}
.stay{height:300px;margin-top:-2px}
.stay-b{padding:16px 20px;font-size:12.500px;line-height:17px;color:#555}
.stay-b h4{margin:0;font-size:12.500px;font-weight:700;color:#00aff0;line-height:18px}
.stay-b p{margin:0 0 16px}
.status-tip{position:absolute;left:2px;bottom:0;height:22px;width:127px;background:#f2f2f2;border:1px solid #ccc;border-width:1px 1px 0 0;font-size:14px;line-height:22px;padding-left:4px;color:#222;white-space:nowrap}

/* devtools */
.devtools{height:235px;flex:none;background:#fff;font-size:11px;color:#222;display:flex;flex-direction:column;letter-spacing:.15px;border-top:1px solid #ddd}
.dt-tabs{height:30px;flex:none;background:#f9f9fa;border-bottom:1px solid #e0e0e2;display:flex;align-items:center;position:relative}
.dt-pick{width:34px;height:100%;border-right:1px solid #e0e0e2;display:flex;align-items:center;justify-content:center;margin-right:12px}
.dt-t{display:flex;align-items:center;gap:6px;padding-right:21px;white-space:nowrap;height:100%}
.dt-perf{padding-right:19px}
.dt-on{color:#0a84ff}
.dt-on::before{content:"";position:absolute;top:-1px;left:640px;width:79px;height:2px;background:#0a84ff}
.brace{font-size:13px;letter-spacing:1px}
.dt-right{margin-left:auto;display:flex;align-items:center;gap:10px;padding-right:2px}
.vsep{display:block;width:1px;height:22px;background:#e0e0e2}
.dots{font-size:9px;color:#333}
.dt-filter{height:30px;flex:none;background:#fff;border-bottom:1px solid #e0e0e2;display:flex;align-items:center}
.dt-trash{width:34px;height:22px;border-right:1px solid #e0e0e2;display:flex;align-items:center;justify-content:center;margin-right:13px}
.dt-url{display:flex;align-items:center;gap:3px;color:#888;width:1023px}
.dt-pause{width:36px;border-left:1px solid #e0e0e2;border-right:1px solid #e0e0e2;text-align:center;height:22px;line-height:22px;margin-right:6px;font-size:10px}
.chips{display:flex;align-items:center;width:399px;gap:13.500px;font-size:10.500px;color:#444}
.chip-on{background:#e4e4e5;padding:0 6px;border-radius:2px;height:22px;line-height:22px;margin-right:-3px}
.checks{display:flex;border-left:1px solid #e0e0e2;padding:0 9px;height:22px;align-items:center;font-size:10.200px;color:#444;width:271px;letter-spacing:0}
.checks label{display:flex;align-items:center;gap:6px;white-space:nowrap;width:144px}
.checks label + label{width:auto}
.cb{display:block;width:14px;height:14px;border:1px solid #b5b5b5;border-radius:3px;background:#f0f0f0}
.throttle{border-left:1px solid #e0e0e2;padding-left:13px;height:22px;line-height:22px;width:103px;font-size:10.500px;white-space:nowrap;color:#444}
.har{font-size:10.500px;color:#444;overflow:hidden;flex:1}
.dt-main{flex:1;min-height:0;display:flex}
.net{width:1360px;padding-left:2px;display:flex;flex-direction:column;overflow:hidden;position:relative;flex:none}
.net::after{content:"";position:absolute;left:881px;top:0;bottom:8px;width:1px;background:#d03cb0}
.row-h,.row{display:grid;grid-template-columns:70px 86px 200px 192px 75px 65px 110px 81px 479px;height:24px;align-items:center}
.row-h{flex:none;background:#f9f9fa;border-bottom:1px solid #e0e0e2;position:relative;z-index:1;text-align:center;color:#444}
.row-h>span{border-right:1px solid #e4e4e4;height:20px;line-height:24px}
.row-h>span.ticks{border:0;display:flex;font-size:9px;height:100%;text-align:left;line-height:24px;background:linear-gradient(#ddd,#ddd) 80px 0/1px 100% no-repeat,linear-gradient(#ddd,#ddd) 161px 0/1px 100% no-repeat,linear-gradient(#ddd,#ddd) 243px 0/1px 100% no-repeat,linear-gradient(#ddd,#ddd) 326px 0/1px 100% no-repeat,linear-gradient(#ddd,#ddd) 407px 0/1px 100% no-repeat}
.ticks i{font-style:normal;width:82px;padding-left:5px;white-space:nowrap;letter-spacing:-.1px}
.ticks i:first-child{width:84px;padding-left:8px}
.rows{flex:1;min-height:0;overflow:hidden;position:relative}
.row{background:#fff;color:#222}
.row.clip{margin-top:-14px}
.row>span{white-space:nowrap;overflow:hidden;height:24px;line-height:23px}
.row>span:first-child{padding-left:3px}
.row>.f,.row>.d{display:flex;align-items:center;gap:6px;height:22px;align-self:start}
.f svg,.d svg{flex:none;margin-left:4px}
.alt{background:#f2f2f2}
.dim>span{color:#777}
.sel{background:#0074e8}
.sel>span{color:#fff}
.st{display:inline-block;height:16px;line-height:16px;width:25px;text-align:center;border-radius:3px;color:#fff;font-weight:400;font-size:11.500px;letter-spacing:0;vertical-align:middle;margin-top:-2px}
.ok{background:#58b25d}.ok2{background:#008a00}.err{background:#a52ddc}
.dim .st{color:#fff}
.tl{display:block;background:
 linear-gradient(#cfcfd2,#cfcfd2) 80px 0/1px 100% no-repeat,
 linear-gradient(#cfcfd2,#cfcfd2) 161px 0/1px 100% no-repeat,
 linear-gradient(#cfcfd2,#cfcfd2) 243px 0/1px 100% no-repeat,
 linear-gradient(#cfcfd2,#cfcfd2) 326px 0/1px 100% no-repeat,
 linear-gradient(#cfcfd2,#cfcfd2) 407px 0/1px 100% no-repeat,
 repeating-linear-gradient(90deg,transparent 0 19.500px,#eeeef0 19.500px 20.500px)}
.sel .tl{background:none}
.tl em{font-style:normal;font-size:10px;padding-left:4px;background:#fff}
.row>.tl{color:#222;overflow:hidden}
.redbox{position:absolute;left:0;top:59px;width:874px;height:28px;border:2px solid #f00;z-index:2}
.dt-status{height:8px;flex:none;background:#f9f9fa;border-top:1px solid #e0e0e2;margin-left:-2px}
.vscroll{width:13px;background:#e9e9ea;position:relative;border-right:1px solid #e0e0e2;flex:none}
.vscroll i{position:absolute;left:0;right:0;top:96px;height:10px;background:#a8a8a8}
.panel{flex:1;min-width:0;overflow:hidden;background:#fff;position:relative;font-size:11px}
.p-tabs{height:24px;background:#f9f9fa;border-bottom:1px solid #e0e0e2;display:flex;align-items:center;gap:22px;padding-left:8px;font-size:11px;white-space:nowrap}
.p-side{width:16px;margin-right:-5px;display:flex}
.p-on{color:#0a84ff;position:relative}
.p-on::before{content:"";position:absolute;left:-11px;right:-11px;top:-5px;height:2px;background:#0a84ff}
.p-line{display:flex;align-items:center;gap:5px;padding-left:4px;white-space:nowrap;color:#333;font-size:10.500px}
.l1{height:18px}.l2{height:16px}.l3{height:25px}.l4{height:18px}
.m{font-family:"DejaVu Sans Mono",monospace;font-size:11.600px;color:#333;letter-spacing:0}
.l3 .st{margin:0 0 0 1px}
.nf{margin-left:2px;letter-spacing:.4px}
.qm{margin-left:11px}
.lnk{margin-left:12px;letter-spacing:0}
.lnk + .lnk{margin-left:14px}
.p-filter{height:20px;margin:2px 0 0 4px;border:1px solid #e0e0e2;border-right:0;display:flex;align-items:center;gap:3px;padding-left:10px;color:#777;font-size:10.500px}
.p-sec{height:21px;border-bottom:1px solid #e0e0e2;display:flex;align-items:center;gap:4px;padding-left:6px;font-size:11px}
.tri{display:block;border:5px solid transparent;border-top:6px solid #999;border-bottom:0}
.p-hdr{height:18px;display:flex;align-items:center;padding-left:11px;gap:9px;white-space:nowrap;font-size:10.500px;letter-spacing:.2px}
.q{display:block;width:13px;height:13px;border:1px solid #ddd;border-radius:50%;font-style:normal;text-align:center;line-height:11px;color:#ccc;font-size:9px}
.hk{color:#0a84ff}
.hv{color:#dd00a9;margin-left:-5px}
```
